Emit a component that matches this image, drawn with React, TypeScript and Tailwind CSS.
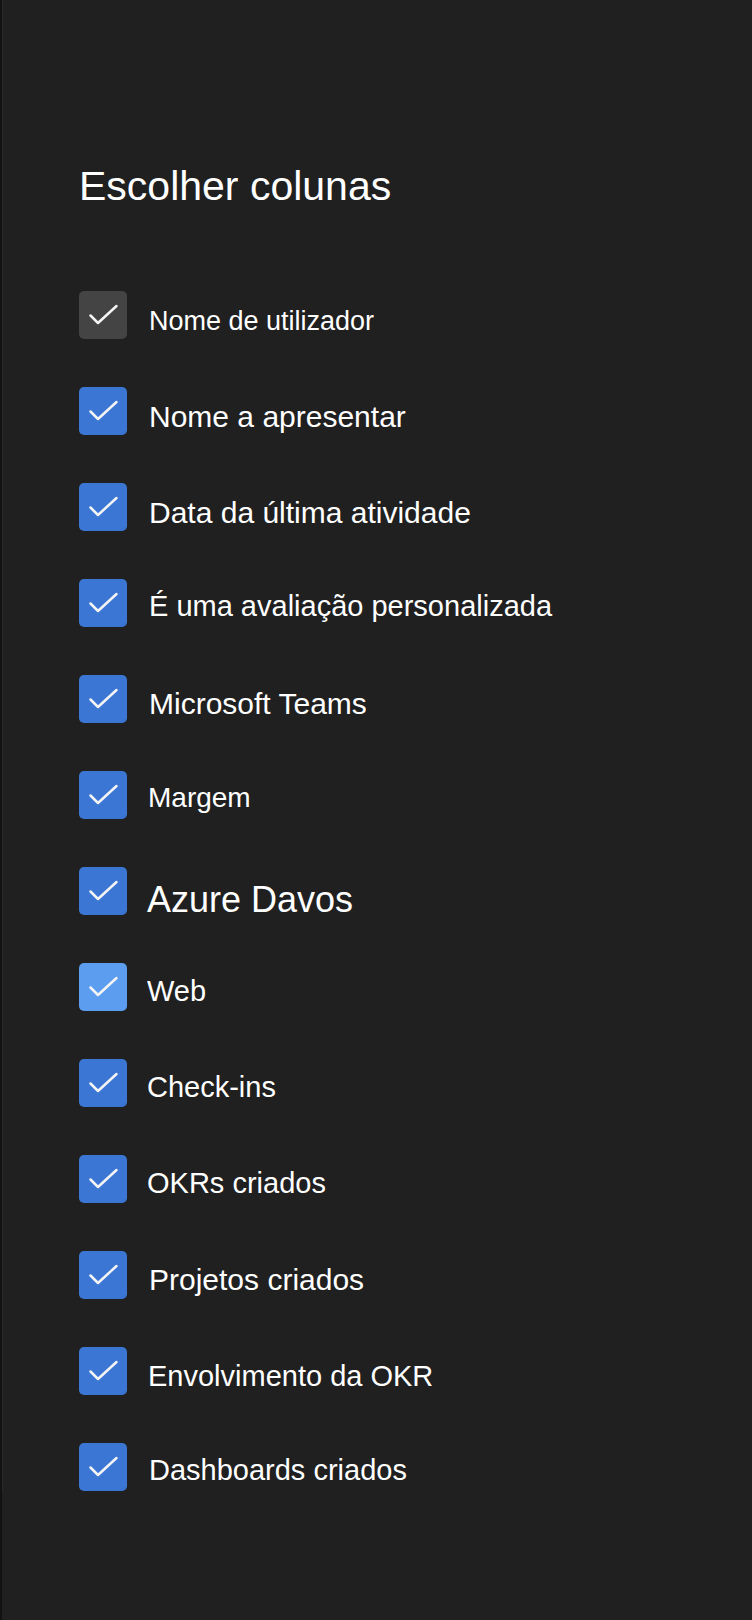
type Column = {
  label: string;
  text: string; // tamanho + ajuste da linha de base
  tone: "gray" | "blue" | "light";
};

const columns: Column[] = [
  { label: "Nome de utilizador", text: "text-[27px] pt-[6px] pl-[2px]", tone: "gray" },
  { label: "Nome a apresentar", text: "text-[30px] pt-[6px] pl-[2px]", tone: "blue" },
  { label: "Data da última atividade", text: "text-[30px] pt-[6px] pl-[2px]", tone: "blue" },
  { label: "É uma avaliação personalizada", text: "text-[29px] pt-[3px] pl-[2px]", tone: "blue" },
  { label: "Microsoft Teams", text: "text-[30px] pt-[5px] pl-[2px]", tone: "blue" },
  { label: "Margem", text: "text-[28px] pt-[3px] pl-[1px]", tone: "blue" },
  { label: "Azure Davos", text: "text-[36px] pt-[9px]", tone: "blue" },
  { label: "Web", text: "text-[29px] pt-[4px]", tone: "light" },
  { label: "Check-ins", text: "text-[29px] pt-[4px]", tone: "blue" },
  { label: "OKRs criados", text: "text-[29px] pt-[4px]", tone: "blue" },
  { label: "Projetos criados", text: "text-[30px] pt-[5px] pl-[2px]", tone: "blue" },
  { label: "Envolvimento da OKR", text: "text-[29px] pt-[5px] pl-[1px]", tone: "blue" },
  { label: "Dashboards criados", text: "text-[29px] pt-[3px] pl-[2px]", tone: "blue" },
];

const toneClass = {
  gray: "bg-[#444444]",
  blue: "bg-[#3b76d4]",
  light: "bg-[#5c9df0]",
};

const CheckBox = ({ tone }: { tone: Column["tone"] }) => {
  return (
    <div className={`flex h-12 w-12 shrink-0 items-center justify-center rounded-[5px] ${toneClass[tone]}`}>
      <svg width="48" height="48" viewBox="0 0 48 48" fill="none">
        <path
          d="M11.5 24.5 L19 32 L37.5 15"
          stroke="#f4f4f4"
          strokeWidth="2.5"
          strokeLinecap="round"
          strokeLinejoin="round"
        />
      </svg>
    </div>
  );
};

const App = () => {
  return (
    <div
      className="min-h-[1620px] w-full border-l-[2px] border-[#121212] bg-[#202020] text-white"
      style={{ fontFamily: '"Liberation Sans", Arial, sans-serif' }}
    >
      <div className="border-l border-[#2a2a2a] pl-[76px] pt-[162px]">
        <h1 className="text-[41px] leading-[48px] font-normal text-white">
          Escolher colunas
        </h1>

        {/* lista das colunas */}
        <div className="mt-[81px] flex flex-col gap-12">
          {columns.map((col) => (
            <div key={col.label} className="flex h-12 items-start gap-5">
              <CheckBox tone={col.tone} />
              <span className={`leading-[48px] whitespace-nowrap text-white ${col.text}`}>
                {col.label}
              </span>
            </div>
          ))}
        </div>
      </div>
    </div>
  );
};

export default App;
